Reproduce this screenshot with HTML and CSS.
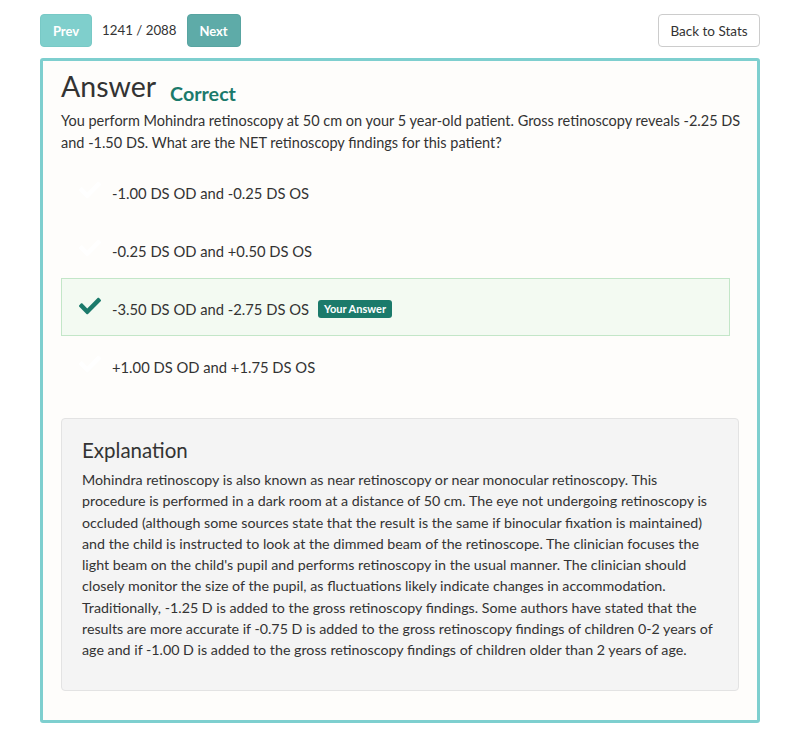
FILE: index.html
```html
<!DOCTYPE html>
<html>
<head>
<meta charset="utf-8">
<link rel="stylesheet" href="styles.css">
</head>
<body>
<div class="page">
  <div class="topbar">
    <div class="nav">
      <button class="btn btn-prev">Prev</button>
      <span class="counter">1241 / 2088</span>
      <button class="btn btn-next">Next</button>
    </div>
    <button class="btn btn-back">Back to Stats</button>
  </div>
  <div class="card">
    <div class="heading">
      <h1 class="title">Answer</h1>
      <span class="status">Correct</span>
    </div>
    <p class="question">You perform Mohindra retinoscopy at 50 cm on your 5 year-old patient. Gross retinoscopy reveals -2.25 DS<br>and -1.50 DS. What are the NET retinoscopy findings for this patient?</p>
    <ul class="options">
      <li class="option"><svg class="check faint" viewBox="0 0 512 512"><path d="M173.9 439.4L7.5 273c-10-10-10-26.2 0-36.2l36.2-36.2c10-10 26.2-10 36.2 0L192 312.7 432.1 72.6c10-10 26.2-10 36.2 0l36.2 36.2c10 10 10 26.2 0 36.2L210.1 439.4c-10 10-26.2 10-36.2 0z"/></svg><span>-1.00 DS OD and -0.25 DS OS</span></li>
      <li class="option"><svg class="check faint" viewBox="0 0 512 512"><path d="M173.9 439.4L7.5 273c-10-10-10-26.2 0-36.2l36.2-36.2c10-10 26.2-10 36.2 0L192 312.7 432.1 72.6c10-10 26.2-10 36.2 0l36.2 36.2c10 10 10 26.2 0 36.2L210.1 439.4c-10 10-26.2 10-36.2 0z"/></svg><span>-0.25 DS OD and +0.50 DS OS</span></li>
      <li class="option selected"><svg class="check" viewBox="0 0 512 512"><path d="M173.9 439.4L7.5 273c-10-10-10-26.2 0-36.2l36.2-36.2c10-10 26.2-10 36.2 0L192 312.7 432.1 72.6c10-10 26.2-10 36.2 0l36.2 36.2c10 10 10 26.2 0 36.2L210.1 439.4c-10 10-26.2 10-36.2 0z"/></svg><span>-3.50 DS OD and -2.75 DS OS</span><span class="badge">Your Answer</span></li>
      <li class="option"><svg class="check faint" viewBox="0 0 512 512"><path d="M173.9 439.4L7.5 273c-10-10-10-26.2 0-36.2l36.2-36.2c10-10 26.2-10 36.2 0L192 312.7 432.1 72.6c10-10 26.2-10 36.2 0l36.2 36.2c10 10 10 26.2 0 36.2L210.1 439.4c-10 10-26.2 10-36.2 0z"/></svg><span>+1.00 DS OD and +1.75 DS OS</span></li>
    </ul>
    <div class="explanation">
      <h2 class="exp-title">Explanation</h2>
      <p class="exp-text">Mohindra retinoscopy is also known as near retinoscopy or near monocular retinoscopy. This<br>procedure is performed in a dark room at a distance of 50 cm. The eye not undergoing retinoscopy is<br>occluded (although some sources state that the result is the same if binocular fixation is maintained)<br>and the child is instructed to look at the dimmed beam of the retinoscope. The clinician focuses the<br>light beam on the child's pupil and performs retinoscopy in the usual manner. The clinician should<br>closely monitor the size of the pupil, as fluctuations likely indicate changes in accommodation.<br>Traditionally, -1.25 D is added to the gross retinoscopy findings. Some authors have stated that the<br>results are more accurate if -0.75 D is added to the gross retinoscopy findings of children 0-2 years of<br>age and if -1.00 D is added to the gross retinoscopy findings of children older than 2 years of age.</p>
    </div>
  </div>
</div>
</body>
</html>
```
FILE: styles.css
```css
* { box-sizing: border-box; }
body {
  margin: 0;
  background: #fff;
  font-family: Lato, "Open Sans", sans-serif;
  color: #333;
}
.page {
  padding: 14px 40px 0 40px;
}
.topbar {
  display: flex;
  justify-content: space-between;
  align-items: center;
  height: 33px;
}
.nav {
  display: flex;
  align-items: center;
}
.btn {
  font-family: inherit;
  height: 33px;
  border-radius: 4px;
  font-size: 13px;
  padding: 0 12px;
  cursor: pointer;
}
.btn-prev {
  width: 52px;
  padding: 0;
  background: #7fcfcc;
  border: 1px solid #78c9c6;
  color: #fff;
  font-weight: 700;
}
.btn-next {
  width: 54px;
  padding: 0;
  background: #5eaba8;
  border: 1px solid #58a4a1;
  color: #fff;
  font-weight: 700;
}
.counter {
  font-size: 13.3px;
  margin: 0 10px 0 10px;
  color: #333;
  position: relative;
  top: -1px;
}
.btn-back {
  width: 102px;
  padding: 0;
  background: #fff;
  border: 1px solid #ccc;
  color: #333;
  font-size: 13.5px;
}
.card {
  margin-top: 11px;
  border: 3px solid #7ecfcf;
  border-radius: 3px;
  background: #fefdfb;
  padding: 7px 18px 30px 18px;
  height: 665px;
}
.heading {
  display: flex;
  align-items: baseline;
  gap: 14px;
}
.title {
  margin: 0;
  font-size: 28.5px;
  font-weight: 400;
  line-height: 36px;
  color: #333;
}
.status {
  font-size: 19.7px;
  font-weight: 700;
  color: #1b7a6b;
  position: relative;
  top: 4px;
}
.question {
  margin: 6px -14px 0 0;
  font-size: 14.5px;
  line-height: 22px;
}
.options {
  list-style: none;
  margin: 8px 9px 0 0;
  padding: 0;
}
.option {
  display: flex;
  align-items: center;
  height: 58px;
  padding-left: 17px;
  padding-top: 3px;
  font-size: 14.75px;
  border: 1px solid transparent;
}
.option .check + span {
  margin-left: -2px;
}
.option.selected {
  background: #f3faf2;
  border-color: #c3e6c8;
}
.check {
  width: 22px;
  height: 22px;
  fill: #1b7a6b;
  margin-right: 13px;
  flex: none;
  position: relative;
  top: -3px;
}
.check.faint {
  fill: #fff;
}
.badge {
  margin-left: 9px;
  background: #1b7a6b;
  color: #fff;
  font-size: 11px;
  font-weight: 700;
  padding: 3px 6px;
  border-radius: 3px;
  line-height: 12px;
}
.explanation {
  margin-top: 24px;
  background: #f4f4f4;
  border: 1px solid #e3e3e3;
  border-radius: 4px;
  padding: 17px 6px 30px 20px;
}
.exp-title {
  margin: 0 0 5px 0;
  font-size: 20.5px;
  font-weight: 400;
  line-height: 28px;
}
.exp-text {
  margin: 0;
  font-size: 14.25px;
  line-height: 21.25px;
  white-space: nowrap;
}
```
